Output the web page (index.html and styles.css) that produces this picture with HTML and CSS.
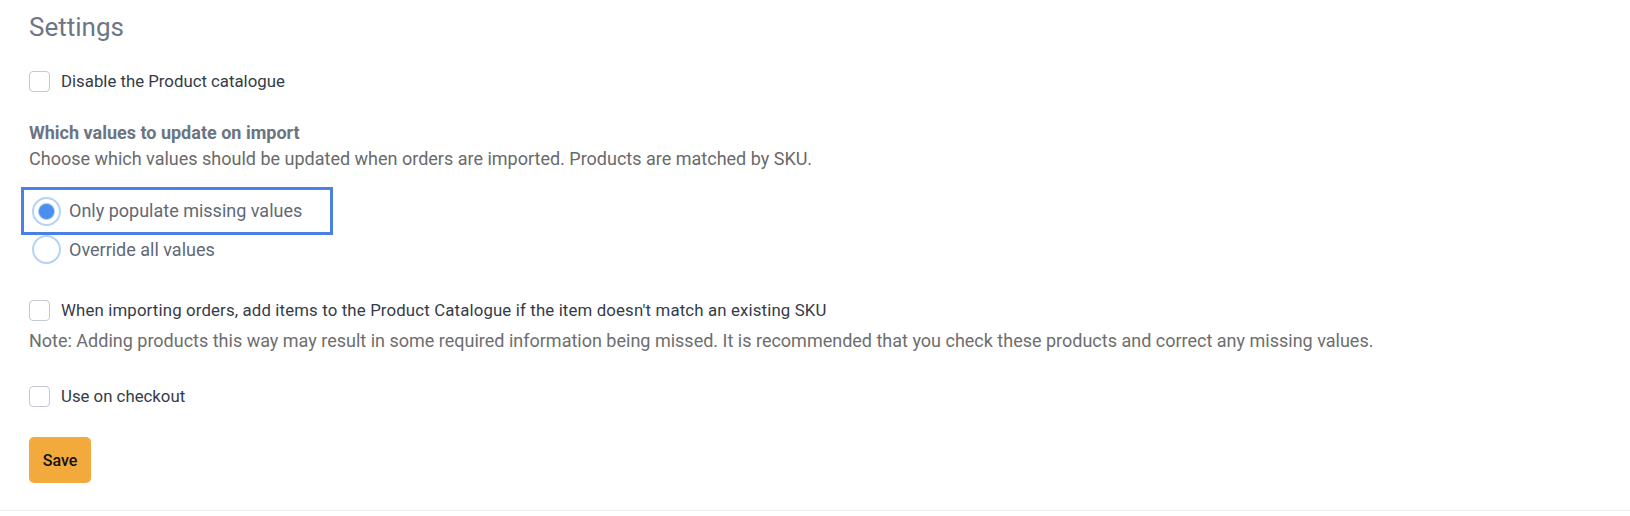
FILE: index.html
```html
<!DOCTYPE html>
<html lang="en">
<head>
<meta charset="utf-8">
<title>Settings</title>
<link rel="stylesheet" href="styles.css">
</head>
<body>
<div class="page">
  <h2 class="title">Settings</h2>

  <label class="check-row first">
    <span class="checkbox"></span>
    <span class="check-label">Disable the Product catalogue</span>
  </label>

  <div class="section">
    <div class="section-title">Which values to update on import</div>
    <div class="section-desc">Choose which values should be updated when orders are imported. Products are matched by SKU.</div>
  </div>

  <div class="radio-group">
    <label class="radio-row focused">
      <span class="radio checked"><span class="dot"></span></span>
      <span class="radio-label">Only populate missing values</span>
    </label>
    <label class="radio-row">
      <span class="radio"></span>
      <span class="radio-label">Override all values</span>
    </label>
  </div>

  <label class="check-row import">
    <span class="checkbox"></span>
    <span class="check-label">When importing orders, add items to the Product Catalogue if the item doesn't match an existing SKU</span>
  </label>
  <p class="note">Note: Adding products this way may result in some required information being missed. It is recommended that you check these products and correct any missing values.</p>

  <label class="check-row checkout">
    <span class="checkbox"></span>
    <span class="check-label">Use on checkout</span>
  </label>

  <div class="actions">
    <button class="save-btn" type="button">Save</button>
  </div>
</div>
</body>
</html>
```

FILE: styles.css
```css
* { box-sizing: border-box; }

html, body {
  margin: 0;
  padding: 0;
  background: #ffffff;
}

body {
  font-family: Roboto, "Liberation Sans", Arial, sans-serif;
  font-size: 17px;
  color: #333a47;
}

.page {
  padding: 10px 0 0 29px;
  height: 511px;
  border-bottom: 1px solid #ececec;
}

.title {
  margin: 0;
  font-size: 26px;
  line-height: 34px;
  font-weight: 400;
  color: #6c7685;
}

.check-row {
  display: flex;
  align-items: center;
  gap: 11px;
  height: 22px;
}

.check-row.first { margin-top: 26px; }

.checkbox {
  width: 21px;
  height: 21px;
  border: 1.5px solid #c3c9d0;
  border-radius: 4px;
  background: #fff;
  flex: none;
}

.check-label {
  font-size: 16.8px;
  line-height: 20px;
  color: #343b48;
}

.check-row.import .check-label { letter-spacing: 0.15px; }

.section { margin-top: 30px; }

.section-title {
  font-size: 18px;
  font-weight: 700;
  color: #6b7482;
  line-height: 22px;
}

.section-desc {
  margin-top: 4px;
  font-size: 18px;
  color: #6a6a6a;
  line-height: 22px;
}

.radio-group {
  margin-top: 17px;
  margin-left: -8px;
  display: flex;
  flex-direction: column;
}

.radio-row {
  display: flex;
  align-items: center;
  gap: 8px;
  height: 29px;
  padding-left: 11px;
  width: 312px;
}

.radio-row.focused {
  height: 48px;
  padding-left: 8px;
  border: 3px solid #4a7fe6;
}

.radio {
  width: 29px;
  height: 29px;
  border-radius: 50%;
  border: 2px solid #b3d3f7;
  background: #fff;
  display: flex;
  align-items: center;
  justify-content: center;
  flex: none;
}

.radio .dot {
  width: 15px;
  height: 15px;
  border-radius: 50%;
  background: #4a8eef;
  box-shadow: 0 0 0 1px #a6c9f5;
}

.radio-label {
  font-size: 18px;
  color: #5f6976;
  line-height: 22px;
}

.check-row.import { margin-top: 35px; }

.note {
  margin: 9px 0 0;
  font-size: 18px;
  color: #6e6e6e;
  line-height: 22px;
}

.check-row.checkout { margin-top: 33px; }

.actions { margin-top: 30px; }

.save-btn {
  width: 62px;
  height: 46px;
  border: none;
  border-radius: 5px;
  background: #f2aa3c;
  color: #111;
  font-family: Roboto, "Liberation Sans", Arial, sans-serif;
  font-size: 16px;
  font-weight: 500;
  padding: 0;
}
```
